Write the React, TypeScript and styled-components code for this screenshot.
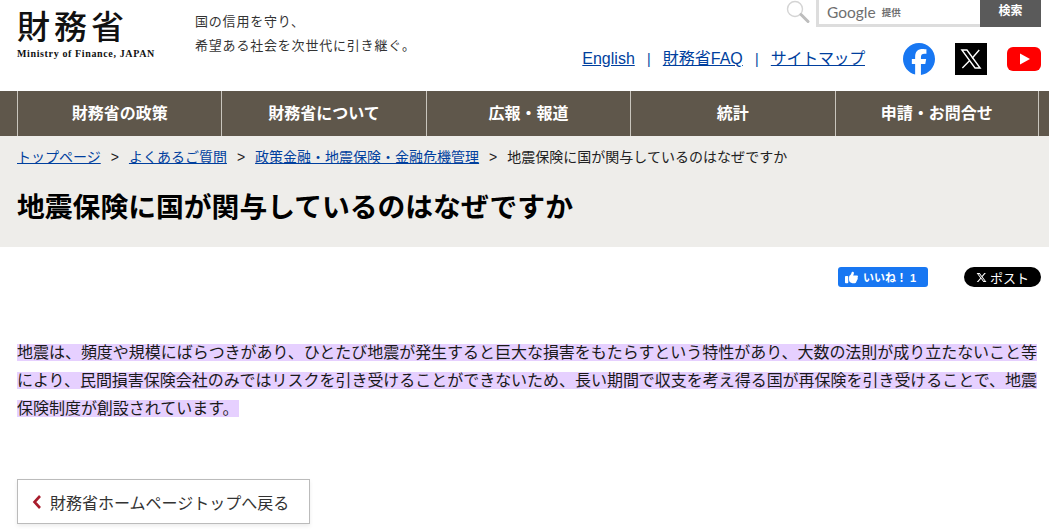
import styled, { createGlobalStyle } from 'styled-components';
import { FaFacebook, FaXTwitter, FaThumbsUp } from 'react-icons/fa6';

const NAV_ITEMS = ['財務省の政策', '財務省について', '広報・報道', '統計', '申請・お問合せ'];

function App() {
  return (
    <>
      <GlobalStyle />
      <Header>
        <Brand>
          <BrandName>財務省</BrandName>
          <BrandSub>Ministry of Finance, JAPAN</BrandSub>
        </Brand>
        <Tagline>
          国の信用を守り、
          <br />
          希望ある社会を次世代に引き継ぐ。
        </Tagline>
        <HeaderRight>
          <SearchRow>
            <SearchIcon width="24" height="24" viewBox="0 0 24 24">
              <circle cx="9" cy="9" r="7.5" fill="#fff" stroke="#d4d4d4" strokeWidth="1.4" />
              <path d="M15 14.5l7 7" stroke="#bdbdbd" strokeWidth="3" strokeLinecap="round" />
            </SearchIcon>
            <SearchBox>
              <GoogleMark>Google</GoogleMark>
              <GoogleNote>提供</GoogleNote>
            </SearchBox>
            <SearchButton>検索</SearchButton>
          </SearchRow>
          <LinkRow>
            <Links>
              <TextLink href="#">English</TextLink>
              <Pipe>|</Pipe>
              <TextLink href="#">財務省FAQ</TextLink>
              <Pipe>|</Pipe>
              <SitemapLink href="#">サイトマップ</SitemapLink>
            </Links>
            <Socials>
              <FaFacebook size={32} color="#1877f2" />
              <XBadge>
                <svg width="22" height="22" viewBox="0 0 24 24" fill="none" stroke="#fff">
                  <path d="M2 2.2h5.6L22 21.8h-5.6z" strokeWidth="1.5" />
                  <path d="M21 2.2l-7.8 8.9M10.6 13.6L2.6 21.8" strokeWidth="1.5" />
                </svg>
              </XBadge>
              <svg width="34" height="24" viewBox="0 0 34 24">
                <rect width="34" height="24" rx="6" fill="#ff0000" />
                <path d="M13 6.5L23 12l-10 5.500z" fill="#fff" />
              </svg>
            </Socials>
          </LinkRow>
        </HeaderRight>
      </Header>

      <Nav>
        {NAV_ITEMS.map((item) => (
          <NavItem key={item}>{item}</NavItem>
        ))}
      </Nav>

      <TitleArea>
        <Breadcrumb>
          <CrumbLink href="#">トップページ</CrumbLink>
          <CrumbSep>&gt;</CrumbSep>
          <CrumbLink href="#">よくあるご質問</CrumbLink>
          <CrumbSep>&gt;</CrumbSep>
          <CrumbLink href="#">政策金融・地震保険・金融危機管理</CrumbLink>
          <CrumbSep>&gt;</CrumbSep>
          <span>地震保険に国が関与しているのはなぜですか</span>
        </Breadcrumb>
        <Title>地震保険に国が関与しているのはなぜですか</Title>
      </TitleArea>

      <ShareRow>
        <LikeButton>
          <FaThumbsUp size={13} />
          いいね！ 1
        </LikeButton>
        <PostButton>
          <FaXTwitter size={11} />
          ポスト
        </PostButton>
      </ShareRow>

      <Answer>
        <Highlight>
          地震は、頻度や規模にばらつきがあり、ひとたび地震が発生すると巨大な損害をもたらすという特性があり、大数の法則が成り立たないこと等により、民間損害保険会社のみではリスクを引き受けることができないため、長い期間で収支を考え得る国が再保険を引き受けることで、地震保険制度が創設されています。
        </Highlight>
      </Answer>

      <BackButton href="#">
        <svg width="10" height="16" viewBox="0 0 10 16">
          <path d="M8 2L2.500 8 8 14" fill="none" stroke="#a81c2c" strokeWidth="2.600" />
        </svg>
        財務省ホームページトップへ戻る
      </BackButton>
    </>
  );
}

const GlobalStyle = createGlobalStyle`
  html, body {
    margin: 0;
    height: 531px;
    overflow: hidden;
    background: #fff;
    color: #1a1a1a;
    font-family: "Liberation Sans", "Noto Sans CJK JP", sans-serif;
    font-size: 16px;
  }
`;

const Header = styled.header`
  display: flex;
  height: 91px;
  padding: 0 8px 0 17px;
  box-sizing: border-box;
`;

const Brand = styled.div`
  width: 178px;
  padding-top: 7px;
  color: #111;
`;

const BrandName = styled.div`
  font-size: 33px;
  line-height: 41px;
  font-weight: 500;
  letter-spacing: 4px;
`;

const BrandSub = styled.div`
  font-family: "Liberation Serif", serif;
  font-size: 10px;
  font-weight: 700;
  line-height: 12px;
  letter-spacing: 0.63px;
  white-space: nowrap;
`;

const Tagline = styled.div`
  padding-top: 10px;
  font-size: 13px;
  line-height: 24px;
  letter-spacing: 0.8px;
  color: #333;
  white-space: nowrap;
`;

const HeaderRight = styled.div`
  flex: 1;
  display: flex;
  flex-direction: column;
  align-items: flex-end;
`;

const SearchRow = styled.div`
  display: flex;
  align-items: flex-start;
  height: 27px;
`;

const SearchIcon = styled.svg`
  margin-right: 6px;
`;

const SearchBox = styled.div`
  display: flex;
  align-items: center;
  gap: 6px;
  width: 164px;
  height: 27px;
  padding-left: 8px;
  box-sizing: border-box;
  background: #fff;
  border-left: 3px solid #ddd;
  border-bottom: 3px solid #ddd;
  color: #6f6f6f;
`;

const GoogleMark = styled.span`
  font-family: Lato, sans-serif;
  font-size: 15.5px;
`;

const GoogleNote = styled.span`
  font-size: 9.5px;
  font-weight: 700;
`;

const SearchButton = styled.div`
  width: 61px;
  height: 27px;
  background: #5a5a5a;
  color: #fff;
  font-size: 12px;
  font-weight: 700;
  line-height: 22px;
  text-align: center;
`;

const LinkRow = styled.div`
  display: flex;
  align-items: center;
  margin-top: 16px;
`;

const Links = styled.div`
  display: flex;
  align-items: baseline;
  margin-right: 38px;
  margin-top: -4px;
`;

const TextLink = styled.a`
  color: #003f9e;
  text-decoration: underline;
`;

const SitemapLink = styled(TextLink)`
  letter-spacing: -0.3px;
`;

const Pipe = styled.span`
  width: 28px;
  text-align: center;
  color: #003f9e;
  font-size: 14px;
`;

const Socials = styled.div`
  display: flex;
  align-items: center;
  gap: 20px;
  height: 32px;
`;

const XBadge = styled.div`
  display: flex;
  align-items: center;
  justify-content: center;
  width: 32px;
  height: 32px;
  background: #000;
`;

const Nav = styled.nav`
  display: grid;
  grid-template-columns: repeat(5, 204.4px);
  height: 45px;
  padding-left: 17px;
  background: #5f574b;
  box-sizing: border-box;
`;

const NavItem = styled.div`
  display: flex;
  align-items: center;
  justify-content: center;
  padding-bottom: 4px;
  border-left: 1px solid #c9c5bd;
  color: #fff;
  font-weight: 700;
  font-size: 16px;
  &:last-child {
    border-right: 1px solid #c9c5bd;
  }
`;

const TitleArea = styled.div`
  height: 111px;
  padding: 11px 17px 0;
  box-sizing: border-box;
  background: #eeedea;
`;

const Breadcrumb = styled.div`
  font-size: 14px;
  line-height: 20px;
  color: #222;
`;

const CrumbLink = styled.a`
  color: #003f9e;
  text-decoration: underline;
`;

const CrumbSep = styled.span`
  margin: 0 10px;
`;

const Title = styled.h1`
  margin: 22px 0 0;
  font-size: 27.8px;
  line-height: 38px;
  font-weight: 700;
  color: #000;
`;

const ShareRow = styled.div`
  display: flex;
  justify-content: flex-end;
  gap: 36px;
  padding: 20px 8px 0 0;
`;

const LikeButton = styled.div`
  display: flex;
  align-items: center;
  gap: 5px;
  width: 90px;
  height: 20px;
  padding-left: 7px;
  box-sizing: border-box;
  border-radius: 3px;
  background: #1877f2;
  color: #fff;
  font-size: 11px;
  font-weight: 700;
`;

const PostButton = styled.div`
  display: flex;
  align-items: center;
  justify-content: center;
  gap: 3px;
  width: 77px;
  height: 20px;
  border-radius: 10px;
  background: #000;
  color: #fff;
  font-size: 13px;
`;

const Answer = styled.p`
  margin: 52px 8px 0 17px;
  font-size: 16px;
  letter-spacing: -0.03px;
  line-height: 28px;
`;

const Highlight = styled.span`
  background: #e6d0ff;
`;

const BackButton = styled.a`
  display: flex;
  align-items: center;
  gap: 8px;
  width: 293px;
  height: 45px;
  margin: 56px 0 0 17px;
  padding-left: 14px;
  box-sizing: border-box;
  border: 1px solid #bbb;
  box-shadow: 0 2px 4px rgba(0, 0, 0, 0.08);
  color: #333;
  text-decoration: none;
`;

export default App;
